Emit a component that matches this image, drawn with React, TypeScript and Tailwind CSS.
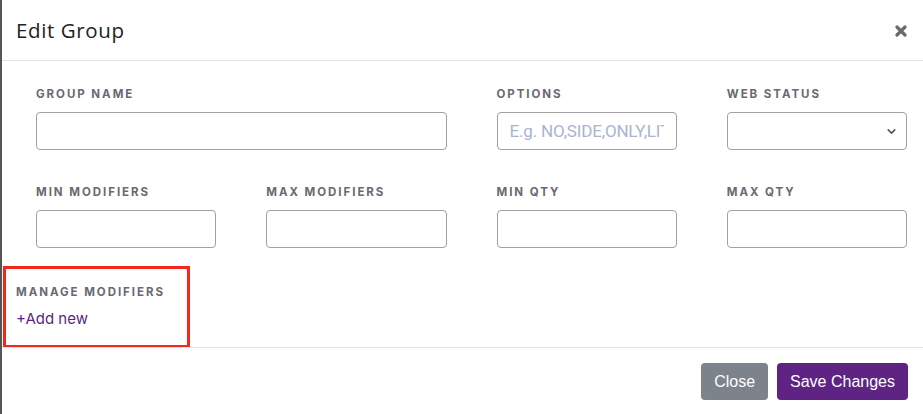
import { ChevronDown } from 'lucide-react';

const labelCls =
  "block text-[11.5px] leading-[14px] font-bold tracking-[0.17em] uppercase text-[#696973] mb-[11px] font-['Inter',sans-serif]";
const inputCls =
  "w-full h-[38px] rounded-[4px] border border-[#a0a0a0] bg-white px-3 text-[16px] outline-none font-['Roboto',sans-serif] placeholder:text-[#a9b5cf]";

function Field({ label, span, children }: { label: string; span?: boolean; children?: React.ReactNode }) {
  return (
    <div className={span ? 'col-span-2' : ''}>
      <label className={labelCls}>{label}</label>
      {children ?? <input className={inputCls} />}
    </div>
  );
}

export default function App() {
  return (
    <div className="w-[923px] h-[414px] bg-white border-l-2 border-[#555] flex flex-col overflow-hidden">
      {/* header */}
      <div className="h-[61px] flex items-center justify-between pl-[14px] pr-[16px] border-b border-[#e4e4e4] shrink-0">
        <h5 className="text-[20.5px] text-[#222] font-['Open_Sans',sans-serif] tracking-[0.03em]">Edit Group</h5>
        <svg width="12" height="12" viewBox="0 0 12 12" className="mt-[1px]">
          <path d="M2 2 L10 10 M10 2 L2 10" stroke="#6a6a6a" strokeWidth="3.2" strokeLinecap="round" />
        </svg>
      </div>

      {/* body */}
      <div className="flex-1">
        <div className="grid grid-cols-4 gap-x-[50px] gap-y-[35px] pl-[34px] pr-[16px] pt-[26px]">
          <Field label="Group Name" span />
          <Field label="Options">
            <input className={inputCls + ' text-[17px] tracking-[-0.01em]'} placeholder="E.g. NO,SIDE,ONLY,LITE" />
          </Field>
          <Field label="Web Status">
            <div className="relative">
              <select className={inputCls + ' appearance-none'} />
              <ChevronDown size={13} strokeWidth={3} className="absolute right-[9px] top-[13px] text-[#555]" />
            </div>
          </Field>
          <Field label="Min Modifiers" />
          <Field label="Max Modifiers" />
          <Field label="Min QTY" />
          <Field label="Max QTY" />
        </div>

        <div className="ml-[1px] mt-[18px] w-[187px] h-[82px] border-[3px] border-[#f5261b] pl-[10px] pt-[16px]">
          <div className="text-[11.5px] leading-[14px] font-bold tracking-[0.17em] uppercase text-[#696973] font-['Inter',sans-serif]">
            Manage Modifiers
          </div>
          <a className="block mt-[10px] text-[15px] leading-[20px] text-[#5d1f85] font-['Inter',sans-serif]">+Add new</a>
        </div>
      </div>

      {/* footer */}
      <div className="h-[67px] -mt-[3px] border-t border-[#e4e4e4] flex items-start justify-end gap-[9px] pt-[15px] pr-[15px] shrink-0 font-['Liberation_Sans',sans-serif]">
        <button className="h-[37px] px-[13px] rounded-[4px] bg-[#7c838b] text-white text-[16px]">Close</button>
        <button className="h-[37px] px-[13px] rounded-[4px] bg-[#5e2383] text-white text-[16px]">Save Changes</button>
      </div>
    </div>
  );
}
